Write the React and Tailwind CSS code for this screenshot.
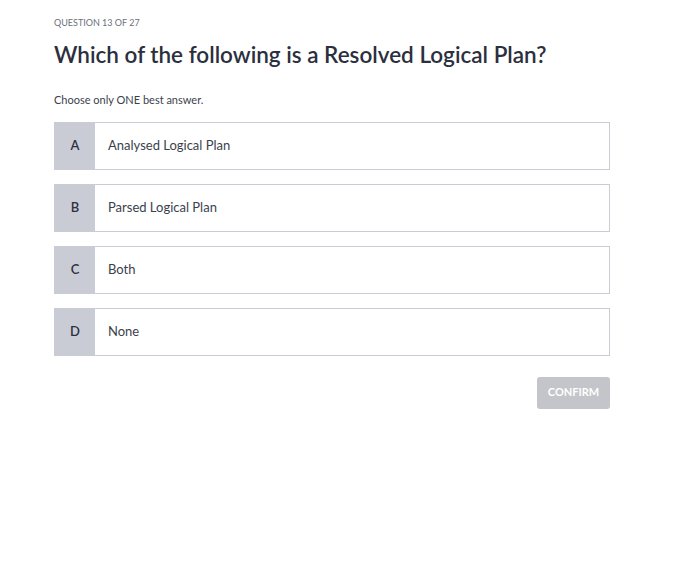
import React from 'react';

const OPTIONS = [
  { key: 'A', label: 'Analysed Logical Plan' },
  { key: 'B', label: 'Parsed Logical Plan' },
  { key: 'C', label: 'Both' },
  { key: 'D', label: 'None' }
];

export default function App() {
  return (
    <div className="min-h-[586px] w-[680px] bg-white font-['Lato','Open_Sans',sans-serif] text-[#2e3140]">
      <div className="pl-[54px] pr-[70px] pt-[17px]">
        <p className="text-[9px] leading-[12px] uppercase text-[#6b6f7b]">Question 13 of 27</p>
        <h1 className="mt-[11px] text-[22.5px] font-semibold leading-[30px] text-[#2b2f3e]">
          Which of the following is a Resolved Logical Plan?
        </h1>
        <p className="mt-[22px] text-[11px] text-[#3b3f4c]">Choose only ONE best answer.</p>

        <div className="mt-[13px] flex flex-col gap-[14px]">
          {OPTIONS.map(({ key, label }) => (
            <div key={key} className="flex h-[48px] border border-[#c9ccd4] bg-white">
              <div className="flex w-[40px] items-center justify-center bg-[#c9ccd5] text-[13px] font-semibold text-[#2e3142]">
                {key}
              </div>
              <div className="flex items-center pl-[13px] text-[13px] text-[#3b3f4c]">{label}</div>
            </div>
          ))}
        </div>

        <div className="mt-[21px] flex justify-end">
          <button className="h-[32px] w-[73px] rounded-[3px] bg-[#c3c5ca] text-[11px] font-bold uppercase text-white">
            Confirm
          </button>
        </div>
      </div>
    </div>
  );
}
